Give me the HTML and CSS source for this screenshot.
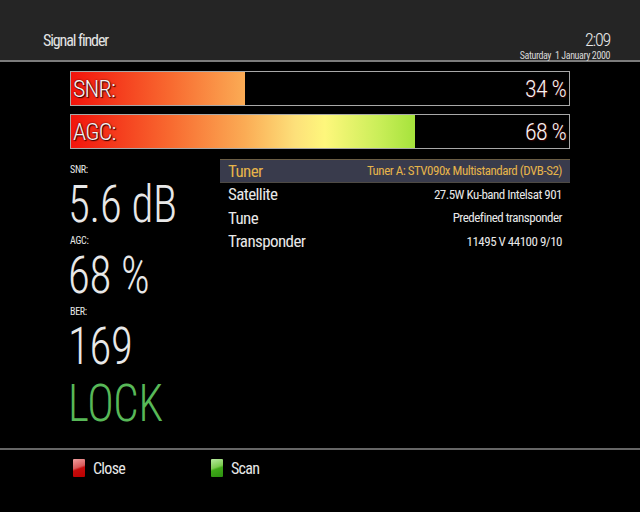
FILE: index.html
```html
<!DOCTYPE html>
<html>
<head>
<meta charset="utf-8">
<link rel="stylesheet" href="styles.css">
</head>
<body>
<div class="screen">
  <header class="header">
    <div class="title">Signal finder</div>
    <div class="clock">
      <div class="time">2:09</div>
      <div class="date">Saturday&nbsp; 1 January 2000</div>
    </div>
  </header>

  <section class="bars">
    <div class="bar">
      <div class="fill" style="width: 34.9%"></div>
      <div class="bar-text"><span>SNR:</span><span>34 %</span></div>
    </div>
    <div class="bar">
      <div class="fill" style="width: 69%"></div>
      <div class="bar-text"><span>AGC:</span><span>68 %</span></div>
    </div>
  </section>

  <section class="main">
    <div class="stats">
      <div class="label">SNR:</div>
      <div class="value">5.6 dB</div>
      <div class="label">AGC:</div>
      <div class="value">68 %</div>
      <div class="label">BER:</div>
      <div class="value">169</div>
      <div class="value lock">LOCK</div>
    </div>
    <div class="list">
      <div class="row selected"><span class="key">Tuner</span><span class="val">Tuner A: STV090x Multistandard (DVB-S2)</span></div>
      <div class="row"><span class="key">Satellite</span><span class="val">27.5W Ku-band Intelsat 901</span></div>
      <div class="row"><span class="key">Tune</span><span class="val">Predefined transponder</span></div>
      <div class="row"><span class="key">Transponder</span><span class="val">11495 V 44100 9/10</span></div>
    </div>
  </section>

  <footer class="footer">
    <div class="btn"><span class="keycap red"></span><span>Close</span></div>
    <div class="btn"><span class="keycap green"></span><span>Scan</span></div>
  </footer>
</div>
</body>
</html>
```
FILE: styles.css
```css
html, body {
  margin: 0;
  padding: 0;
  background: #000;
}
.screen {
  width: 640px;
  height: 512px;
  overflow: hidden;
  display: flex;
  flex-direction: column;
  font-family: "Roboto Condensed", "Liberation Sans Narrow", "DejaVu Sans Condensed", sans-serif;
  font-weight: 400;
  color: #e8e8e8;
}
.header {
  height: 62px;
  background: #252525;
  border-bottom: 2px solid #7c7c7c;
  box-sizing: border-box;
  display: flex;
  justify-content: space-between;
  align-items: flex-start;
  padding: 0 30px 0 43px;
}
.title {
  font-size: 16px;
  line-height: 20px;
  margin-top: 31px;
  letter-spacing: -1.1px;
  color: #e4e4e4;
}
.clock {
  text-align: right;
  margin-top: 31px;
}
.time {
  font-size: 18px;
  line-height: 18px;
  font-weight: 300;
  letter-spacing: -1.2px;
}
.date {
  font-size: 10px;
  line-height: 13px;
  letter-spacing: -0.4px;
  color: #d8d8d8;
}
.bars {
  display: flex;
  flex-direction: column;
  gap: 8px;
  padding: 9px 0 0 70px;
}
.bar {
  width: 498px;
  height: 33px;
  border: 1px solid #a8a8a8;
  display: grid;
}
.fill, .bar-text {
  grid-area: 1 / 1;
}
.fill {
  height: 100%;
  background: linear-gradient(to right, #f2140c 0%, #f86a30 20%, #fbac55 35%, #fde07a 45%, #fef77c 51%, #c9ee58 62%, #a6e33c 69%, #6fd23a 85%, #3fc23a 100%);
  background-size: 498px 100%;
  background-repeat: no-repeat;
}
.bar-text {
  display: flex;
  justify-content: space-between;
  align-items: center;
  padding: 0 3px 0 2px;
  font-size: 24px;
  font-weight: 300;
  letter-spacing: -0.8px;
  color: #f4f4f4;
  text-shadow: 0 0 2px #400, 1px 1px 1px #300;
}
.main {
  display: flex;
  padding: 6px 0 0 70px;
  height: 299px;
  box-sizing: border-box;
}
.stats {
  width: 150px;
  display: flex;
  flex-direction: column;
  margin-top: 7px;
}
.label {
  font-size: 10px;
  line-height: 12px;
  margin-top: 2px;
  letter-spacing: -0.3px;
}
.value {
  font-size: 51px;
  line-height: 57px;
  font-weight: 300;
  letter-spacing: -0.3px;
  margin-left: -2px;
  transform: scaleX(0.88);
  transform-origin: left center;
  white-space: nowrap;
}
.lock {
  color: #58b858;
  margin-top: 0;
}
.list {
  width: 350px;
  display: flex;
  flex-direction: column;
  padding-top: 4px;
}
.row {
  height: 23.5px;
  display: flex;
  justify-content: space-between;
  align-items: center;
  padding: 0 8px;
}
.row.selected {
  background: #393b4c;
  border-top: 1px solid #6a5d44;
  border-bottom: 1px solid #4e4a44;
  color: #e6b44a;
  box-sizing: border-box;
}
.key {
  font-size: 17px;
  letter-spacing: -0.6px;
}
.val {
  font-size: 13px;
  letter-spacing: -0.5px;
}
.footer {
  border-top: 2px solid #666;
  display: flex;
  padding: 8px 0 0 73px;
}
.btn {
  width: 138px;
  display: flex;
  align-items: center;
  gap: 8px;
  font-size: 16px;
  letter-spacing: -0.7px;
  height: 20px;
}
.keycap {
  width: 12px;
  height: 18px;
  border-radius: 1px;
}
.keycap.red {
  background: linear-gradient(160deg, #f0a0a0 0%, #d85a5a 45%, #c40c0c 55%, #b00 100%);
}
.keycap.green {
  background: linear-gradient(160deg, #b8eaa0 0%, #7ccc50 45%, #3fa818 55%, #2c9010 100%);
}
```
